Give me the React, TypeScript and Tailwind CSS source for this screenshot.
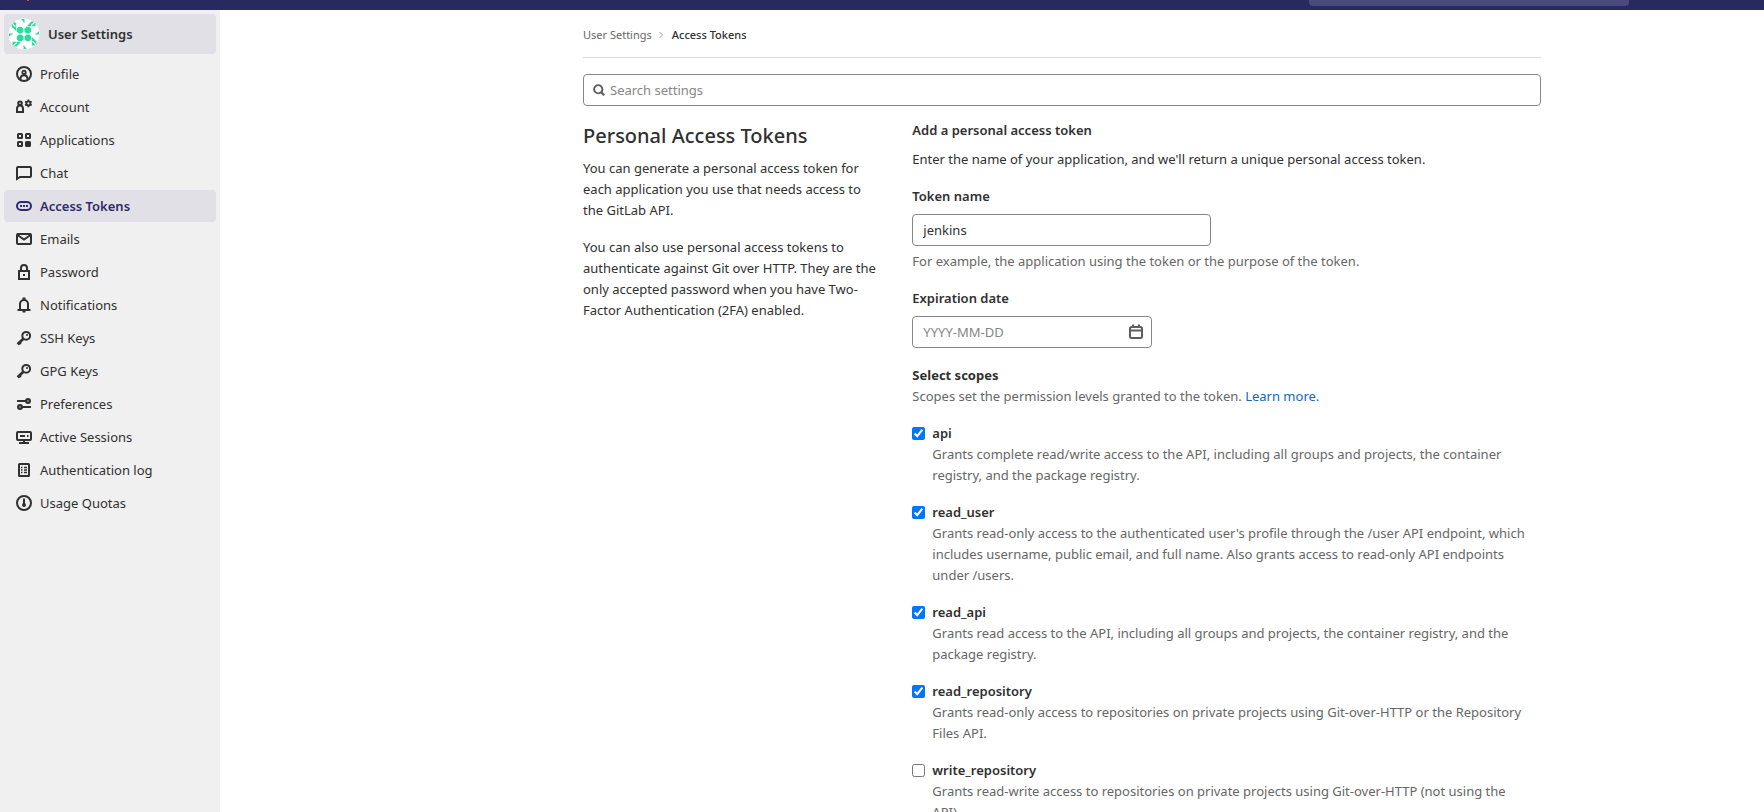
import type { ReactNode } from "react";

type NavItem = { label: string; icon: ReactNode; active?: boolean };
type Scope = { name: string; description: string; checked: boolean };

function Icon({ children, className = "size-4" }: { children: ReactNode; className?: string }) {
  return (
    <svg
      viewBox="0 0 16 16"
      className={`shrink-0 ${className}`}
      fill="none"
      stroke="currentColor"
      strokeWidth="2"
      aria-hidden="true"
    >
      {children}
    </svg>
  );
}

const keyIcon = (
  <Icon>
    <circle cx="10.2" cy="5.8" r="3.9" />
    <path d="M7.6 8.6 1.6 14.2M3.2 12.6l1.6 1.4" strokeWidth="2.8" />
    <circle cx="11" cy="5" r="1" fill="currentColor" stroke="none" />
  </Icon>
);

const navItems: NavItem[] = [
  {
    label: "Profile",
    icon: (
      <Icon>
        <circle cx="8" cy="8" r="7" />
        <circle cx="8" cy="6.4" r="1.7" strokeWidth="1.8" />
        <path d="M4.4 13.4c0-2.6 1.2-4.2 3.6-4.2s3.6 1.6 3.6 4.2" />
      </Icon>
    ),
  },
  {
    label: "Account",
    icon: (
      <Icon>
        <circle cx="4" cy="4.2" r="1.8" />
        <path d="M1 12.9V10c0-2.2 1-3.4 3-3.4S7 7.8 7 10v2.9z" />
        <circle cx="12.4" cy="4.4" r="2" strokeWidth="1.8" />
        <path
          d="M12.4.6v1.8M12.4 6.4v1.8M9.1 2.5l1.6.9M14.1 5.400l1.600.9M9.100 6.300l1.600-.9M14.100 3.400l1.600-.9"
          strokeWidth="1.800"
        />
      </Icon>
    ),
  },
  {
    label: "Applications",
    icon: (
      <Icon>
        <rect x="2" y="2" width="4" height="4" rx="0.5" />
        <rect x="10" y="2" width="4" height="4" rx="0.5" />
        <rect x="2" y="10" width="4" height="4" rx="0.5" />
        <rect x="10" y="10" width="4" height="4" rx="0.5" fill="currentColor" />
      </Icon>
    ),
  },
  {
    label: "Chat",
    icon: (
      <Icon>
        <path d="M1 14V3a1 1 0 0 1 1-1h12a1 1 0 0 1 1 1v8a1 1 0 0 1-1 1H4z" />
      </Icon>
    ),
  },
  {
    label: "Access Tokens",
    active: true,
    icon: (
      <Icon>
        <rect x="1" y="4" width="14" height="8" rx="4" />
        <path d="M4 8h2M7 8h2M10 8h2" strokeWidth="1.8" />
      </Icon>
    ),
  },
  {
    label: "Emails",
    icon: (
      <Icon>
        <rect x="1" y="3" width="14" height="10" rx="1" />
        <path d="m1.5 4 6.500 4.500L14.500 4" />
      </Icon>
    ),
  },
  {
    label: "Password",
    icon: (
      <Icon>
        <path d="M3 7h10v8H3zM5 7V4a3 3 0 0 1 6 0v3" />
        <path d="M7 11h2" />
      </Icon>
    ),
  },
  {
    label: "Notifications",
    icon: (
      <Icon>
        <path d="M1.5 13h13M4 12.500V7a4 4 0 0 1 8 0v5.500" />
        <path d="M6.500 1.500h3M6.500 14.500h3" />
      </Icon>
    ),
  },
  { label: "SSH Keys", icon: keyIcon },
  { label: "GPG Keys", icon: keyIcon },
  {
    label: "Preferences",
    icon: (
      <Icon>
        <path d="M1 5h9M6 11h9" />
        <circle cx="12" cy="5" r="2" fill="#8a8a8a" />
        <circle cx="4" cy="11" r="2" fill="#8a8a8a" />
      </Icon>
    ),
  },
  {
    label: "Active Sessions",
    icon: (
      <Icon>
        <rect x="1" y="3" width="14" height="8" rx="1" />
        <path d="M8 11v3M3 14h10M4 7h5M11 7h1.500" />
      </Icon>
    ),
  },
  {
    label: "Authentication log",
    icon: (
      <Icon>
        <rect x="3" y="2" width="10" height="12" rx="0.500" />
        <path d="M5 5.500h1.500M5 8h1.500M5 10.500h1.500M8 5.500h3M8 8h3M8 10.500h3" strokeWidth="1.500" />
      </Icon>
    ),
  },
  {
    label: "Usage Quotas",
    icon: (
      <Icon>
        <circle cx="8" cy="8" r="7" />
        <path d="M8 3.500V9" />
        <circle cx="8" cy="10" r="2" fill="currentColor" stroke="none" />
      </Icon>
    ),
  },
];

const scopes: Scope[] = [
  {
    name: "api",
    checked: true,
    description:
      "Grants complete read/write access to the API, including all groups and projects, the container registry, and the package registry.",
  },
  {
    name: "read_user",
    checked: true,
    description:
      "Grants read-only access to the authenticated user's profile through the /user API endpoint, which includes username, public email, and full name. Also grants access to read-only API endpoints under /users.",
  },
  {
    name: "read_api",
    checked: true,
    description:
      "Grants read access to the API, including all groups and projects, the container registry, and the package registry.",
  },
  {
    name: "read_repository",
    checked: true,
    description:
      "Grants read-only access to repositories on private projects using Git-over-HTTP or the Repository Files API.",
  },
  {
    name: "write_repository",
    checked: false,
    description:
      "Grants read-write access to repositories on private projects using Git-over-HTTP (not using the API).",
  },
];

const quarterTurns = [0, 90, 180, 270];

function Avatar() {
  return (
    <svg viewBox="0 0 32 32" className="size-8 rounded-full" aria-hidden="true">
      <circle cx="16" cy="16" r="15.5" fill="#fff" />
      <g fill="#2bdc9d">
        {quarterTurns.map((angle) => (
          <g key={angle} transform={`rotate(${angle} 16 16)`}>
            <path d="M10.800 8.800h2.600l2.100 2.100v2.600l-2.100 2.100h-2.600l-2.100-2.100v-2.600z" />
            <path d="M13.200 1h3.300v4.200z" />
            <path d="m19 8.200 4.200-4.600v4.600zM23.200 8.200l4.300-3.800v3.800zM23.200 3.600l3.400 0-3.400 3z" />
          </g>
        ))}
      </g>
    </svg>
  );
}

function Sidebar() {
  return (
    <aside className="w-[220px] shrink-0 bg-[#f0f0f0] px-1 pt-1">
      <a href="#settings" className="flex h-10 items-center gap-2 rounded bg-[#e1e0e6] px-1 font-semibold">
        <Avatar />
        User Settings
      </a>
      <nav aria-label="User settings" className="mt-1">
        <ul className="flex flex-col gap-px">
          {navItems.map((item) => (
            <li key={item.label}>
              <a
                href={`#${item.label}`}
                aria-current={item.active ? "page" : undefined}
                className={
                  item.active
                    ? "flex h-8 items-center gap-2 rounded bg-[#e1e0e6] px-3 font-semibold text-[#2f2a6b]"
                    : "flex h-8 items-center gap-2 rounded px-3"
                }
              >
                {item.icon}
                {item.label}
              </a>
            </li>
          ))}
        </ul>
      </nav>
    </aside>
  );
}

function ScopeOption({ scope }: { scope: Scope }) {
  return (
    <li className="flex gap-[7px] pr-2">
      <input
        type="checkbox"
        id={scope.name}
        defaultChecked={scope.checked}
        aria-describedby={`${scope.name}-help`}
        className="mt-1 size-[13px] shrink-0"
      />
      <div>
        <label htmlFor={scope.name} className="block font-semibold">
          {scope.name}
        </label>
        <p id={`${scope.name}-help`} className="text-[#666]">
          {scope.description}
        </p>
      </div>
    </li>
  );
}

export default function App() {
  return (
    <div className="flex h-screen flex-col overflow-hidden bg-white font-['Noto_Sans',sans-serif] text-[13px] leading-[21px] text-[#303030]">
      <header className="flex h-[10px] shrink-0 items-end justify-between overflow-hidden bg-[#292961] pr-[135px] pb-1 pl-[27px]">
        <span className="mb-[5px] h-[6px] w-[2px] bg-[#e24329]" />
        <input
          type="search"
          aria-label="Search GitLab"
          className="h-8 w-[320px] rounded bg-[#4b4a7b] px-2 text-white"
        />
      </header>

      <div className="flex min-h-0 flex-1">
        <Sidebar />

        <main className="flex min-w-0 flex-1 justify-center pl-[140px]">
          <div className="w-full max-w-[990px] px-4">
            <nav
              aria-label="Breadcrumb"
              className="flex h-12 items-center gap-[6px] border-b border-[#dbdbdb] pt-[2px] text-[11px]"
            >
              <a href="#settings" className="text-[#666]">
                User Settings
              </a>
              <Icon className="size-2 text-[#a0a0a0]">
                <path d="m3 2 6 6-6 6" />
              </Icon>
              <a href="#tokens" aria-current="page" className="font-medium">
                Access Tokens
              </a>
            </nav>

            <div className="mt-4 flex h-8 items-center gap-[5px] rounded border border-[#868686] px-[9px]">
              <Icon className="size-3 text-[#5e5e5e]">
                <circle cx="7" cy="7" r="5.500" strokeWidth="2.600" />
                <path d="m11 11 4 4" strokeWidth="3" />
              </Icon>
              <input
                type="search"
                aria-label="Search settings"
                placeholder="Search settings"
                className="min-w-0 flex-1 pt-px outline-none placeholder:text-[#868686]"
              />
            </div>

            <div className="mt-[14px] grid grid-cols-12 gap-x-[30px]">
              <section className="col-span-4">
                <h1 className="mt-1 mb-[10px] text-[20px] leading-6 font-medium">Personal Access Tokens</h1>
                <p>
                  You can generate a personal access token for each application you use that needs access to the
                  GitLab API.
                </p>
                <p className="mt-4">
                  You can also use personal access tokens to authenticate against Git over HTTP. They are the only
                  accepted password when you have Two-Factor Authentication (2FA) enabled.
                </p>
              </section>

              <form className="col-span-8">
                <h2 className="font-semibold">Add a personal access token</h2>
                <p className="mt-2">
                  Enter the name of your application, and we'll return a unique personal access token.
                </p>

                <label htmlFor="token-name" className="mt-4 block font-semibold">
                  Token name
                </label>
                <input
                  id="token-name"
                  type="text"
                  defaultValue="jenkins"
                  aria-describedby="token-name-help"
                  className="mt-[7px] block h-8 w-[299px] rounded border border-[#868686] px-[10px]"
                />
                <p id="token-name-help" className="mt-[5px] text-[#666]">
                  For example, the application using the token or the purpose of the token.
                </p>

                <label htmlFor="expires" className="mt-4 block font-semibold">
                  Expiration date
                </label>
                <div className="mt-[7px] flex h-8 w-[240px] items-center rounded border border-[#868686] pr-[7px] pl-[10px]">
                  <input
                    id="expires"
                    type="text"
                    placeholder="YYYY-MM-DD"
                    className="min-w-0 flex-1 outline-none placeholder:text-[#868686]"
                  />
                  <button type="button" aria-label="Open datepicker" className="text-[#5e5e5e]">
                    <Icon>
                      <rect x="2" y="3" width="12" height="11" rx="1.500" />
                      <path d="M2 6.500h12" />
                      <path d="M5 .5V3M11 .5V3" />
                    </Icon>
                  </button>
                </div>

                <h3 className="mt-[17px] font-bold">Select scopes</h3>
                <p className="text-[#666]">
                  Scopes set the permission levels granted to the token.{" "}
                  <a href="#scopes" className="text-[#1068bf]">
                    Learn more.
                  </a>
                </p>

                <ul className="mt-4 flex flex-col gap-4">
                  {scopes.map((scope) => (
                    <ScopeOption key={scope.name} scope={scope} />
                  ))}
                </ul>
              </form>
            </div>
          </div>
        </main>
      </div>
    </div>
  );
}
